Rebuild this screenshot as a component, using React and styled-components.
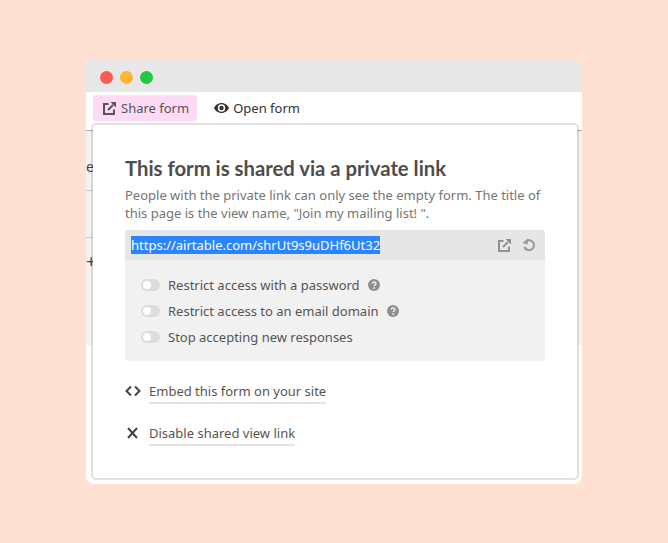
import React from 'react'
import styled, { createGlobalStyle } from 'styled-components'

const GlobalStyle = createGlobalStyle`
  html, body {
    margin: 0;
    padding: 0;
    background: #ffe1d3;
    font-family: "Noto Sans", "Open Sans", sans-serif;
  }
`

const Page = styled.div`
  width: 668px;
  height: 543px;
  padding: 60px 86px 0;
  box-sizing: border-box;
  overflow: hidden;
`

const Window = styled.div`
  position: relative;
  width: 496px;
  height: 424px;
  background: #fdfdfd;
  border-radius: 8px;
  overflow: hidden;
`

const TitleBar = styled.div`
  height: 32px;
  background: #e7e7e7;
  display: flex;
  align-items: center;
  gap: 7px;
  padding: 2px 0 0 13.5px;
  box-sizing: border-box;
`

const Dot = styled.span`
  width: 13px;
  height: 13px;
  border-radius: 50%;
  background: ${({ color }) => color};
`

const Toolbar = styled.div`
  height: 39px;
  display: flex;
  align-items: flex-start;
  gap: 9px;
  padding: 3px 0 0 7px;
  box-sizing: border-box;
  background: #fff;
  border-bottom: 1px solid #b0b0b0;
`

const ToolButton = styled.div`
  height: 26px;
  display: flex;
  align-items: center;
  gap: ${({ active }) => (active ? 5 : 4)}px;
  padding: ${({ active }) => (active ? '0 8px 0 10px' : '0 8px')};
  border-radius: 3px;
  font-size: 13px;
  color: ${({ active }) => (active ? '#555' : '#333')};
  background: ${({ active }) => (active ? '#fedaf5' : 'transparent')};
`

const BackTable = styled.div`
  height: 214px;
  background: #f2f2f2;
`

const BackRow = styled.div`
  width: 50%;
  height: ${({ h }) => h}px;
  padding-top: ${({ pad }) => pad || 0}px;
  display: flex;
  align-items: center;
  border-bottom: 1px solid ${({ plain }) => (plain ? 'transparent' : '#cfcfcf')};
  font-size: ${({ size }) => size || 13}px;
  color: #444;
  box-sizing: border-box;
`

const Popover = styled.div`
  position: absolute;
  left: 5px;
  top: 63px;
  width: 488px;
  height: 357px;
  box-sizing: border-box;
  background: #fff;
  background-clip: padding-box;
  border: 2px solid rgba(0, 0, 0, 0.115);
  border-radius: 5px;
  padding: 30px 32px 0;
  color: #4d4d4d;
`

const Heading = styled.h2`
  margin: 0;
  font-family: "Lato", sans-serif;
  font-size: 20.3px;
  line-height: 26px;
  font-weight: 700;
  color: #4d4d4d;
`

const Description = styled.p`
  margin: 5px 0 0;
  font-size: 13px;
  line-height: 18px;
  color: #757575;
`

const SharePanel = styled.div`
  margin-top: 8px;
  height: 131px;
  background: #f1f1f1;
  border-radius: 3px;
  overflow: hidden;
`

const UrlBar = styled.div`
  height: 30px;
  background: #e6e6e6;
  display: flex;
  align-items: center;
  justify-content: space-between;
  padding: 0 9px 0 6px;
`

const Url = styled.span`
  font-size: 13px;
  line-height: 18px;
  color: #fff;
  background: #2a85ff;
`

const UrlActions = styled.div`
  display: flex;
  align-items: center;
  gap: 11px;
  color: #8f8f8f;
`

const Options = styled.div`
  display: flex;
  flex-direction: column;
  gap: 8px;
  padding: 16px 16px 0;
`

const Option = styled.div`
  height: 18px;
  display: flex;
  align-items: center;
  font-size: 13px;
  color: #555;
`

const Toggle = styled.span`
  width: 19px;
  height: 12px;
  border-radius: 6px;
  background: #dcdcdc;
  position: relative;
  margin-right: 8px;
  flex: none;

  &::after {
    content: '';
    position: absolute;
    left: 2px;
    top: 2px;
    width: 8px;
    height: 8px;
    border-radius: 50%;
    background: #fff;
  }
`

const HelpIcon = styled.svg`
  width: 12px;
  height: 12px;
  margin-left: 8px;
  flex: none;
`

const LinkRow = styled.div`
  display: flex;
  align-items: flex-start;
  margin-top: ${({ top }) => top}px;
  color: #444;
`

const IconSlot = styled.span`
  width: 24px;
  height: 18px;
  display: flex;
  align-items: center;
  color: #444;
`

const LinkText = styled.span`
  font-size: 13px;
  line-height: 18px;
  padding-bottom: 2px;
  border-bottom: 2px solid #e4e4e4;
  color: #555;
`

const ShareIcon = () => (
  <svg width="13" height="13" viewBox="0 0 13 13" fill="none" stroke="currentColor" strokeWidth="2">
    <path d="M5.500 2H1v10h10V7.500" />
    <path d="M5 8 10 3" />
    <path d="M7.500 0H13v5.500Z" fill="currentColor" stroke="none" />
  </svg>
)

const EyeIcon = () => (
  <svg width="15" height="10" viewBox="0 0 15 10">
    <path fillRule="evenodd" fill="#333" d="M7.500 0C11 0 14 2.600 15 5c-1 2.400-4 5-7.500 5S1 7.400 0 5c1-2.400 4-5 7.500-5Zm0 1.300a3.700 3.700 0 1 0 0 7.400 3.700 3.700 0 0 0 0-7.400Zm0 1.500a2.200 2.200 0 1 1 0 4.400 2.200 2.200 0 0 1 0-4.400Z" />
  </svg>
)

const ResetIcon = () => (
  <svg width="14" height="14" viewBox="0 0 14 14" fill="none" stroke="#9a9a9a" strokeWidth="2.200">
    <path d="M4 3.200A5 5 0 1 1 2.400 9" />
    <path d="M0.300 5 5.800 1V6.500Z" fill="#9a9a9a" stroke="none" />
  </svg>
)

const Help = () => (
  <HelpIcon viewBox="0 0 12 12">
    <circle cx="6" cy="6" r="6" fill="#8f8f8f" />
    <path d="M4.200 4.600C4.300 3.500 5 3 6 3c1.100 0 1.900.6 1.900 1.600 0 1.300-1.600 1.300-1.600 2.500" fill="none" stroke="#f0f0f0" strokeWidth="1.400" />
    <circle cx="6.200" cy="9" r=".9" fill="#f0f0f0" />
  </HelpIcon>
)

const CodeIcon = () => (
  <svg width="16" height="12" viewBox="0 0 16 12" fill="none" stroke="currentColor" strokeWidth="2">
    <path d="M6 1.500 1.500 6 6 10.500" />
    <path d="M10 1.500 14.500 6 10 10.500" />
  </svg>
)

const CloseIcon = () => (
  <svg width="16" height="12" viewBox="0 0 16 12" fill="none" stroke="currentColor" strokeWidth="2">
    <path d="M3 1 12 11" />
    <path d="M12 1 3 11" />
  </svg>
)

const options = [
  { label: 'Restrict access with a password', help: true },
  { label: 'Restrict access to an email domain', help: true },
  { label: 'Stop accepting new responses', help: false },
]

const App = () => {
  return (
    <Page>
      <GlobalStyle />
      <Window>
        <TitleBar>
          <Dot color="#ff5a52" />
          <Dot color="#ffb52e" />
          <Dot color="#22c83f" />
        </TitleBar>
        <Toolbar>
          <ToolButton active>
            <ShareIcon />
            Share form
          </ToolButton>
          <ToolButton>
            <EyeIcon />
            Open form
          </ToolButton>
        </Toolbar>
        <BackTable>
          <BackRow h={60} pad={12} size={14}>e</BackRow>
          <BackRow h={47} />
          <BackRow h={46} plain size={18}>+</BackRow>
        </BackTable>

        <Popover>
          <Heading>This form is shared via a private link</Heading>
          <Description>
            People with the private link can only see the empty form. The title of
            <br />
            this page is the view name, "Join my mailing list! ".
          </Description>
          <SharePanel>
            <UrlBar>
              <Url>https://airtable.com/shrUt9s9uDHf6Ut32</Url>
              <UrlActions>
                <ShareIcon />
                <ResetIcon />
              </UrlActions>
            </UrlBar>
            <Options>
              {options.map((option) => (
                <Option key={option.label}>
                  <Toggle />
                  {option.label}
                  {option.help && <Help />}
                </Option>
              ))}
            </Options>
          </SharePanel>
          <LinkRow top={21}>
            <IconSlot><CodeIcon /></IconSlot>
            <LinkText>Embed this form on your site</LinkText>
          </LinkRow>
          <LinkRow top={20}>
            <IconSlot><CloseIcon /></IconSlot>
            <LinkText>Disable shared view link</LinkText>
          </LinkRow>
        </Popover>
      </Window>
    </Page>
  )
}

export default App
